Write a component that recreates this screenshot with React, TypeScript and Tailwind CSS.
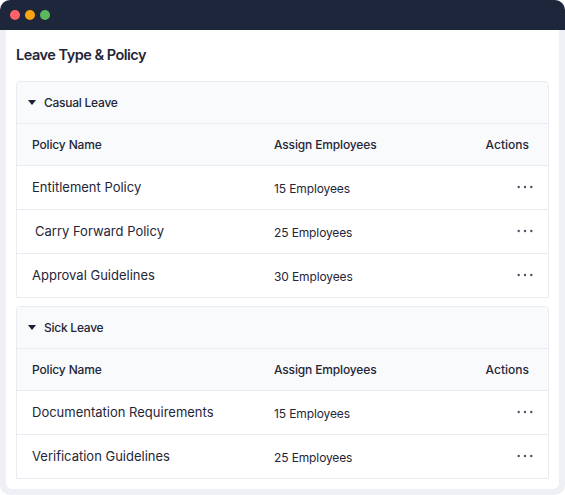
import React from "react";

const leaveGroups = [
  {
    name: "Casual Leave",
    policies: [
      { name: "Entitlement Policy", employees: "15 Employees" },
      { name: "Carry Forward Policy", employees: "25 Employees", indent: true },
      { name: "Approval Guidelines", employees: "30 Employees" },
    ],
  },
  {
    name: "Sick Leave",
    policies: [
      { name: "Documentation Requirements", employees: "15 Employees" },
      { name: "Verification Guidelines", employees: "25 Employees" },
    ],
  },
];

function Dots() {
  return (
    <svg width="16" height="4" viewBox="0 0 16 4" className="fill-[#4b5262]">
      <circle cx="1.7" cy="2" r="1.2" />
      <circle cx="8" cy="2" r="1.2" />
      <circle cx="14.3" cy="2" r="1.2" />
    </svg>
  );
}

export default function App() {
  return (
    <div className="w-[565px] h-[495px] bg-white overflow-hidden font-['Inter',sans-serif] text-[#1f2638]">
      <div className="h-full flex flex-col rounded-[10px] bg-[#eef0f5] overflow-hidden">
        {/* Window bar */}
        <div className="h-[30px] shrink-0 bg-[#1e263c] flex items-center gap-[5px] pl-[10px]">
          <span className="w-[10px] h-[10px] rounded-full bg-[#ff6369]" />
          <span className="w-[10px] h-[10px] rounded-full bg-[#fca311]" />
          <span className="w-[10px] h-[10px] rounded-full bg-[#5cb85c]" />
        </div>

        <div className="flex-1 mx-[6px] mb-[6px] bg-white rounded-b-[6px] px-[10px] overflow-hidden">
          <h1 className="h-[51px] pb-[2px] flex items-center text-[14.5px] font-semibold tracking-[-0.5px]">
            Leave Type &amp; Policy
          </h1>

          <div className="flex flex-col gap-2">
            {leaveGroups.map((group) => (
              <section
                key={group.name}
                className="border border-[#e8ebf0] rounded-t-[4px] overflow-hidden"
              >
                <div className="h-[42px] bg-[#f8fafc] border-b border-[#e8ebf0] flex items-center pl-[11px]">
                  <svg width="8" height="5" viewBox="0 0 8 5" className="fill-[#1a2033]">
                    <path d="M0 0h8L4 5z" />
                  </svg>
                  <span className="ml-2 text-[12px] font-medium tracking-[-0.25px]">
                    {group.name}
                  </span>
                </div>

                <div className="h-[42px] bg-[#f8fafc] border-b border-[#e8ebf0] flex items-center pl-[15px] pr-[19px] text-[12px] font-medium tracking-[-0.15px]">
                  <span className="w-[242px]">Policy Name</span>
                  <span className="flex-1">Assign Employees</span>
                  <span className="tracking-normal">Actions</span>
                </div>

                {group.policies.map((policy, i) => {
                  const isLast = i === group.policies.length - 1;
                  return (
                    <div
                      key={policy.name}
                      className={`flex items-center px-[15px] ${
                        isLast ? "h-[43px]" : "h-[44px] border-b border-[#e8ebf0]"
                      }`}
                    >
                      <span className={`w-[242px] text-[13px] ${policy.indent ? "pl-[3px]" : ""}`}>
                        {policy.name}
                      </span>
                      <span className="flex-1 text-[12px] tracking-[-0.12px] mt-[2px]">
                        {policy.employees}
                      </span>
                      <span className="-mt-[1px] flex">
                        <Dots />
                      </span>
                    </div>
                  );
                })}
              </section>
            ))}
          </div>
        </div>
      </div>
    </div>
  );
}
